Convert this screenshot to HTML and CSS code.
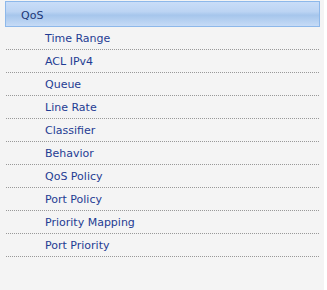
FILE: index.html
```html
<!DOCTYPE html>
<html lang="en">
<head>
    <meta charset="UTF-8">
    <title>QoS Menu</title>
    <link rel="stylesheet" href="styles.css">
</head>
<body>
    <div class="sidebar">
        <div class="menu-head">QoS</div>
        <ul class="menu-list">
            <li><a href="#">Time Range</a></li>
            <li><a href="#">ACL IPv4</a></li>
            <li><a href="#">Queue</a></li>
            <li><a href="#">Line Rate</a></li>
            <li><a href="#">Classifier</a></li>
            <li><a href="#">Behavior</a></li>
            <li><a href="#">QoS Policy</a></li>
            <li><a href="#">Port Policy</a></li>
            <li><a href="#">Priority Mapping</a></li>
            <li><a href="#">Port Priority</a></li>
        </ul>
    </div>
</body>
</html>
```

FILE: styles.css
```css
body {
    margin: 0;
    background: #fff;
    font-family: "DejaVu Sans", Verdana, sans-serif;
    font-size: 11px;
}

.sidebar {
    width: 324px;
    height: 290px;
    background: #f4f4f4;
    padding-top: 1px;
    box-sizing: border-box;
}

.menu-head {
    margin-left: 5px;
    width: 315px;
    height: 26px;
    box-sizing: border-box;
    border: 1px solid #8db8ea;
    background: linear-gradient(#c9ddf8 0%, #bcd4f3 40%, #a6c6ec 55%, #c6dbf6 100%);
    color: #1d3878;
    padding: 2px 0 0 15px;
    line-height: 24px;
}

.menu-list {
    list-style: none;
    margin: 0 0 0 6px;
    padding: 0;
    width: 313px;
}

.menu-list li {
    height: 22px;
    box-sizing: content-box;
    border-bottom: 1px dotted #999;
    padding-left: 39px;
    line-height: 24px;
    overflow: hidden;
}

.menu-list a {
    color: #1f3c93;
    text-decoration: none;
}
```
